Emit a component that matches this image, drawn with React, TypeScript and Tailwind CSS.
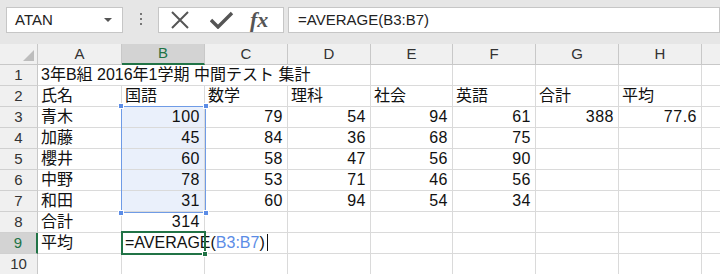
import * as React from "react";

const font = { fontFamily: "'Liberation Sans', 'Noto Sans CJK JP', sans-serif" };

const cols = ["A", "B", "C", "D", "E", "F", "G", "H", ""];

type Row = (string | number)[];

const rows: Row[] = [
  ["", "", "", "", "", "", "", "", ""],
  ["氏名", "国語", "数学", "理科", "社会", "英語", "合計", "平均", ""],
  ["青木", 100, 79, 54, 94, 61, 388, 77.6, ""],
  ["加藤", 45, 84, 36, 68, 75, "", "", ""],
  ["櫻井", 60, 58, 47, 56, 90, "", "", ""],
  ["中野", 78, 53, 71, 46, 56, "", "", ""],
  ["和田", 31, 60, 94, 54, 34, "", "", ""],
  ["合計", 314, "", "", "", "", "", "", ""],
  ["平均", "", "", "", "", "", "", "", ""],
  ["", "", "", "", "", "", "", "", ""],
];

function Handle({ className }: { className: string }) {
  return <div className={`absolute h-[6px] w-[6px] border border-white bg-[#5b8ce6] ${className}`} />;
}

function Cell({ value, row, col }: { value: string | number; row: number; col: number }) {
  const selected = col === 1 && row >= 3 && row <= 7;
  const numeric = typeof value === "number";
  return (
    <div
      className={`flex h-[21px] items-end overflow-visible whitespace-nowrap border-b border-r border-[#dadada] pb-[1px] text-[16px] leading-[18px] text-[#111] ${
        numeric ? "justify-end pr-[4px] tracking-[0.5px]" : "pl-[3px]"
      } ${selected ? "bg-[#eaf0fb]" : "bg-white"}`}
    >
      {numeric ? (value === 77.6 ? "77.6" : String(value)) : value}
    </div>
  );
}

export default function App() {
  return (
    <div className="h-[274px] w-[720px] overflow-hidden bg-white" style={font}>
      {/* formula bar */}
      <div className="flex h-[44px] items-start bg-[#e6e6e6] pt-[7px]">
        <div className="ml-[6px] flex h-[26px] w-[117px] items-center justify-between border border-[#c6c6c6] bg-white pl-[8px] pr-[10px] text-[15px] text-[#222]">
          <span>ATAN</span>
          <span className="h-0 w-0 border-x-[4px] border-t-[4px] border-x-transparent border-t-[#555]" />
        </div>
        <div className="flex w-[35px] flex-col items-center gap-[3px] pt-[6px]">
          <span className="h-[2px] w-[2px] bg-[#777]" />
          <span className="h-[2px] w-[2px] bg-[#777]" />
          <span className="h-[2px] w-[2px] bg-[#777]" />
        </div>
        <div className="flex h-[26px] w-[126px] items-center border border-[#c6c6c6] bg-white">
          <svg width="22" height="18" viewBox="0 0 22 18" className="ml-[10px]">
            <path d="M3 1 L19 17 M19 1 L3 17" stroke="#555" strokeWidth="2" fill="none" />
          </svg>
          <svg width="24" height="18" viewBox="0 0 24 18" className="ml-[19px]">
            <path d="M1 9 L8 16 L22 2" stroke="#555" strokeWidth="3.4" fill="none" />
          </svg>
          <span
            className="ml-[16px] text-[22px] font-bold italic leading-none text-[#555]"
            style={{ fontFamily: "'Liberation Serif', serif" }}
          >
            fx
          </span>
        </div>
        <div className="ml-[4px] flex h-[26px] flex-1 items-center border border-[#c6c6c6] bg-white pl-[9px] text-[15px] text-[#222]">
          =AVERAGE(B3:B7)
        </div>
      </div>

      {/* sheet */}
      <div className="relative">
        <div className="grid grid-cols-[38px_84px_83px_83px_83px_82px_83px_83px_83px_40px]">
          {/* header row */}
          <div className="relative h-[21px] border-b border-r border-[#c8c8c8] bg-[#f0f0f0]">
            <svg width="11" height="11" className="absolute bottom-[3px] right-[3px]">
              <path d="M11 0 L11 11 L0 11 Z" fill="#bdbdbd" />
            </svg>
          </div>
          {cols.map((c, i) =>
            c === "B" ? (
              <div
                key={i}
                className="flex h-[21px] items-center justify-center border-b-2 border-r border-b-[#217346] border-r-[#c8c8c8] bg-[#d3d3d3] text-[15px] text-[#217346]"
              >
                {c}
              </div>
            ) : (
              <div
                key={i}
                className="flex h-[21px] items-center justify-center border-b border-r border-[#c8c8c8] bg-[#f0f0f0] text-[15px] text-[#333]"
              >
                {c}
              </div>
            )
          )}

          {rows.map((row, ri) => {
            const r = ri + 1;
            const active = r === 9;
            return (
              <React.Fragment key={r}>
                <div
                  className={`flex h-[21px] items-center justify-center border-b border-[#d0d0d0] text-[15px] ${
                    active
                      ? "border-r-2 border-r-[#217346] bg-[#d3d3d3] text-[#217346]"
                      : "border-r border-r-[#c8c8c8] bg-[#f0f0f0] text-[#333]"
                  }`}
                >
                  {r}
                </div>
                {r === 1 ? (
                  <>
                    <div className="col-span-4 flex h-[21px] items-end whitespace-nowrap border-b border-r border-[#dadada] bg-white pb-[1px] pl-[3px] text-[16px] leading-[18px] text-[#111]">
                      3年B組 2016年1学期 中間テスト 集計
                    </div>
                    {row.slice(4).map((v, ci) => (
                      <Cell key={ci} value={v} row={r} col={ci + 4} />
                    ))}
                  </>
                ) : r === 9 ? (
                  <>
                    <Cell value={row[0]} row={r} col={0} />
                    <div className="relative z-10 flex h-[21px] items-end whitespace-nowrap border-b border-[#dadada] bg-white pb-[1px] pl-[3px] text-[16px] leading-[18px] text-[#111]">
                      <span className="shrink-0">=AVERAGE(</span>
                      <span className="shrink-0 text-[#5b8ce6]">B3:B7</span>
                      <span className="shrink-0">)</span>
                      <span className="mb-[1px] ml-[2px] h-[17px] w-[1px] shrink-0 bg-[#111]" />
                    </div>
                    {row.slice(2).map((v, ci) => (
                      <Cell key={ci} value={v} row={r} col={ci + 2} />
                    ))}
                  </>
                ) : (
                  row.map((v, ci) => <Cell key={ci} value={v} row={r} col={ci} />)
                )}
              </React.Fragment>
            );
          })}
        </div>

        {/* selection range B3:B7 */}
        <div className="pointer-events-none absolute left-[121px] top-[62px] z-20 h-[107px] w-[85px] border border-[#6f9be6]">
          <Handle className="-left-[4px] -top-[4px]" />
          <Handle className="-right-[4px] -top-[4px]" />
          <Handle className="-bottom-[4px] -left-[4px]" />
          <Handle className="-bottom-[4px] -right-[4px]" />
        </div>

        {/* active cell B9 */}
        <div className="pointer-events-none absolute left-[121px] top-[187px] z-20 h-[24px] w-[85px] border-2 border-[#217346]">
          <div className="absolute -bottom-[4px] -right-[4px] h-[6px] w-[6px] border border-white bg-[#217346]" />
        </div>
      </div>
    </div>
  );
}
